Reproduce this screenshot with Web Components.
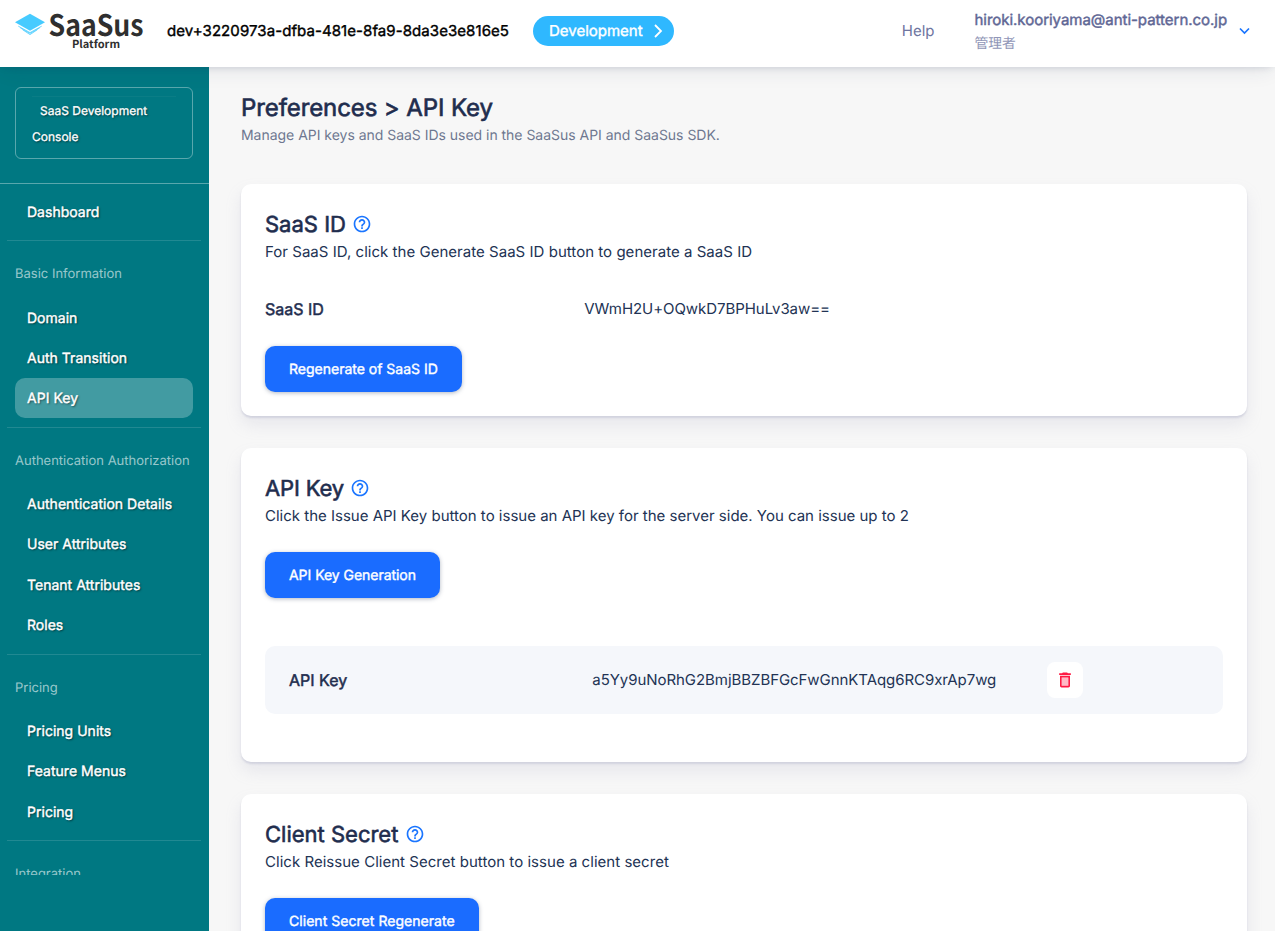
<!DOCTYPE html>
<html lang="en">
<head>
<meta charset="utf-8">
<title>SaaSus Platform</title>
<style>
html,body{margin:0;height:100%;overflow:hidden;background:#f7f7f7}
body{font-family:Inter,"Noto Sans CJK JP",sans-serif;color:#223354;text-rendering:geometricPrecision}
</style>
</head>
<body>
<saasus-app></saasus-app>
<script>
const define=(name,html,setup)=>customElements.define(name,class extends HTMLElement{
  constructor(){super();this.attachShadow({mode:'open'}).innerHTML=html;if(setup)setup(this)}
});

define('saasus-logo',`<style>
:host{display:block;width:129px;height:67px;flex:none;margin-right:-1px}
svg{display:block;width:129px;height:67px;overflow:visible}
text{font-family:"Noto Sans CJK JP",sans-serif;font-weight:700;fill:#2f2f2f}
</style>
<svg viewBox="0 0 129 67">
<path d="M0 22.300 15 13.800 30 22.300 15 30.800Z" fill="#46cbff"/>
<path d="M3.300 26.200 15 32.600 26.700 26.200M5.300 27.900 15 33.400 24.700 27.900M7.600 29.700 15 34.600 22.400 29.700" fill="none" stroke="#46cbff" stroke-width=".8"/>
<text x="33.500" y="36" font-size="29.500" textLength="95" lengthAdjust="spacingAndGlyphs">SaaSus</text>
<text x="57" y="47.800" font-size="11" textLength="48" lengthAdjust="spacing">Platform</text>
</svg>`);

define('env-badge',`<style>
:host{display:flex;align-items:center;box-sizing:border-box;width:141px;height:30px;border-radius:15px;background:#2fb8ff;color:#fff;padding:0 10px 1px 16px;justify-content:space-between;font-size:15px;-webkit-text-stroke:.4px #fff}
svg{display:block;margin-top:1px}
</style><span><slot></slot></span><svg width="12" height="16" viewBox="0 0 12 16"><path d="M3 2 9 8 3 14" fill="none" stroke="#fff" stroke-width="1.800"/></svg>`);

define('app-header',`<style>
:host{display:flex;align-items:center;box-sizing:border-box;height:67px;flex:none;padding:0 25px 0 15px;background:#fff;position:relative;z-index:2;box-shadow:0 2px 8px -3px rgba(34,51,84,.2),0 5px 22px -4px rgba(34,51,84,.12)}
.id{margin:-6px 24px 0 24px;width:342px;font-size:15px;letter-spacing:.08px;color:#000;-webkit-text-stroke:.4px #000;white-space:nowrap}
env-badge{margin-top:-5px}
.help{margin:-6px 40px 0 auto;font-size:15px;color:#6e759f}
.user{width:252px;margin-right:12.500px;color:#5f6795;padding-bottom:1px}
.mail{font-size:15px;line-height:22px;letter-spacing:-.03px;-webkit-text-stroke:.45px #5f6795;white-space:nowrap}
.role{font-size:13.800px;line-height:26px;color:#9096b7}
svg{display:block;margin-top:-6px}
</style>
<saasus-logo></saasus-logo>
<div class="id">dev+3220973a-dfba-481e-8fa9-8da3e3e816e5</div>
<env-badge>Development</env-badge>
<div class="help">Help</div>
<div class="user"><div class="mail">hiroki.kooriyama@anti-pattern.co.jp</div><div class="role">管理者</div></div>
<svg width="11" height="8" viewBox="0 0 11 8"><path d="M1 1.500 5.500 6 10 1.500" fill="none" stroke="#1a75ff" stroke-width="1.700"/></svg>`);

define('nav-item',`<style>
:host{display:flex;align-items:center;box-sizing:border-box;height:40.4px;margin:0 16px 0 15px;padding:1.3px 12px 0;border-radius:10px;color:#fff;font-size:14px;letter-spacing:.02px;-webkit-text-stroke:.4px #fff;text-shadow:1px 1px 2px rgba(0,0,0,.6);white-space:nowrap}
:host([active]){background:rgba(255,255,255,.26)}
</style><span><slot></slot></span>`);

define('nav-group',`<style>
:host{display:block}
.rule{height:1px;margin:8.4px 8px 0 7px;background:rgba(255,255,255,.13)}
.label{padding:23px 0 12.9px 15px;font-size:13px;line-height:20px;color:rgba(255,255,255,.6);white-space:nowrap}
</style><div class="rule"></div><div class="label"></div><slot></slot>`,el=>{
  el.shadowRoot.querySelector('.label').textContent=el.getAttribute('label');
});

define('side-bar',`<style>
:host{display:flex;flex-direction:column;width:209px;flex:none;background:#007882;box-sizing:border-box;padding-bottom:56px;overflow:hidden}
.menu{flex:1;min-height:0;overflow:hidden}
.console{box-sizing:border-box;width:178px;height:72px;margin:20px 0 24px 15px;border:1px solid rgba(255,255,255,.35);border-radius:6px;padding:8px 16px 0;color:#fff;font-size:12px;line-height:26px;-webkit-text-stroke:.3px #fff;text-shadow:1px 1px 2px rgba(0,0,0,.6)}
.console i{display:block;height:1px;background:rgba(255,255,255,.04);margin-bottom:1px}
.console p{margin:0;text-indent:8px}
.line{height:1px;background:rgba(255,255,255,.35);margin-bottom:7.5px}
</style>
<div class="menu">
<div class="console"><i></i><p>SaaS Development<br>Console</p></div>
<div class="line"></div>
<nav-item>Dashboard</nav-item>
<nav-group label="Basic Information"><nav-item>Domain</nav-item><nav-item>Auth Transition</nav-item><nav-item active>API Key</nav-item></nav-group>
<nav-group label="Authentication Authorization"><nav-item>Authentication Details</nav-item><nav-item>User Attributes</nav-item><nav-item>Tenant Attributes</nav-item><nav-item>Roles</nav-item></nav-group>
<nav-group label="Pricing"><nav-item>Pricing Units</nav-item><nav-item>Feature Menus</nav-item><nav-item>Pricing</nav-item></nav-group>
<nav-group label="Integration"></nav-group>
</div>`);

define('help-icon',`<style>:host{display:block;width:20px;height:20px}svg{display:block;width:20px;height:20px}</style>
<svg viewBox="0 0 24 24" fill="#1a75ff"><path d="M11 18h2v-2h-2v2zm1-16C6.480 2 2 6.480 2 12s4.480 10 10 10 10-4.480 10-10S17.520 2 12 2zm0 18c-4.410 0-8-3.590-8-8s3.590-8 8-8 8 3.590 8 8-3.590 8-8 8zm0-14c-2.210 0-4 1.790-4 4h2c0-1.100.9-2 2-2s2 .9 2 2c0 2-3 1.750-3 5h2c0-2.250 3-2.500 3-5 0-2.210-1.790-4-4-4z"/></svg>`);

define('primary-button',`<style>
:host{display:flex;align-items:center;width:max-content;box-sizing:border-box;height:46px;padding:1px 24px 0;border-radius:10px;background:#1a6cff;color:#fff;font-size:14px;letter-spacing:var(--button-spacing,0);-webkit-text-stroke:.4px #fff;box-shadow:0 1px 4px rgba(34,51,84,.35);white-space:nowrap}
</style><span><slot></slot></span>`);

define('info-card',`<style>
:host{display:block;padding:24px;border-radius:10px;background:#fff;box-shadow:0 9px 16px rgba(159,162,191,.18),0 2px 2px rgba(159,162,191,.32)}
h2{display:flex;align-items:center;gap:6.500px;margin:0;height:32px;font-size:22px;font-weight:400;-webkit-text-stroke:.6px #1f2d4e;color:#1f2d4e;white-space:nowrap}
h2 span{padding-top:2px;letter-spacing:var(--heading-spacing,0)}
p{margin:0;line-height:24px;font-size:15px;letter-spacing:var(--text-spacing,0);white-space:nowrap}
</style><h2><span></span><help-icon></help-icon></h2><p></p><slot></slot>`,el=>{
  el.shadowRoot.querySelector('h2 span').textContent=el.getAttribute('heading');
  el.shadowRoot.querySelector('p').textContent=el.getAttribute('description');
});

define('data-row',`<style>
:host{display:grid;grid-template-columns:4fr 6fr 2fr;align-items:center;height:42px;font-size:15px}
:host([boxed]){height:68px;padding:0 24px;border-radius:10px;background:#f5f7fb}
b{font-weight:400;font-size:16px;-webkit-text-stroke:.5px #1f2d4e;color:#1f2d4e}
.value{padding-bottom:2px;letter-spacing:-.06px}
</style><b></b><span class="value"><slot></slot></span><slot name="action"></slot>`,el=>{
  el.shadowRoot.querySelector('b').textContent=el.getAttribute('label');
});

define('delete-button',`<style>
:host{display:flex;align-items:center;justify-content:center;width:36px;height:36px;border-radius:8px;background:#fff}
svg{display:block}
</style><svg width="20" height="20" viewBox="0 0 24 24" fill="#ff1943"><path d="M8 9h8v10H8z" opacity=".3"/><path d="M15.500 4l-1-1h-5l-1 1H5v2h14V4zM6 19c0 1.100.9 2 2 2h8c1.100 0 2-.9 2-2V7H6v12zM8 9h8v10H8V9z"/></svg>`);

define('page-title',`<style>
:host{display:block;padding-top:1px}
h1{margin:0;font-size:24px;font-weight:400;line-height:32px;letter-spacing:-.1px;-webkit-text-stroke:.65px #1f2d4e;color:#1f2d4e;white-space:nowrap}
p{margin:0;font-size:14px;line-height:24px;letter-spacing:-.025px;color:#6e7790;white-space:nowrap}
</style><h1><span>Preferences &gt; API Key</span></h1><p><span>Manage API keys and SaaS IDs used in the SaaSus API and SaaSus SDK.</span></p>`);

define('saasus-app',`<style>
:host{display:flex;flex-direction:column;height:100vh;overflow:hidden}
.body{display:flex;flex:1;min-height:0}
main{flex:1;min-width:0;overflow:hidden;padding:24px 28px 0 32px;background:#f7f7f7}
page-title{margin-bottom:36px}
info-card{margin-bottom:32px}
.c1,.c3{--text-spacing:.03px}
.c2{--heading-spacing:-.15px;--button-spacing:-.04px}
.c3{--button-spacing:.04px}
.r1{margin:24px 0 16px}
.b2{margin:24px 0 48px}
.r2{margin-bottom:24px}
</style>
<app-header></app-header>
<div class="body"><side-bar></side-bar><main>
<page-title></page-title>
<info-card class="c1" heading="SaaS ID" description="For SaaS ID, click the Generate SaaS ID button to generate a SaaS ID">
<data-row class="r1" label="SaaS ID">VWmH2U+OQwkD7BPHuLv3aw==</data-row>
<primary-button>Regenerate of SaaS ID</primary-button></info-card>
<info-card class="c2" heading="API Key" description="Click the Issue API Key button to issue an API key for the server side. You can issue up to 2">
<primary-button class="b2">API Key Generation</primary-button>
<data-row class="r2" boxed label="API Key">a5Yy9uNoRhG2BmjBBZBFGcFwGnnKTAqg6RC9xrAp7wg<delete-button slot="action"></delete-button></data-row></info-card>
<info-card class="c3" heading="Client Secret" description="Click Reissue Client Secret button to issue a client secret">
<primary-button class="b2">Client Secret Regenerate</primary-button></info-card>
</main></div>`);
</script>
</body>
</html>
